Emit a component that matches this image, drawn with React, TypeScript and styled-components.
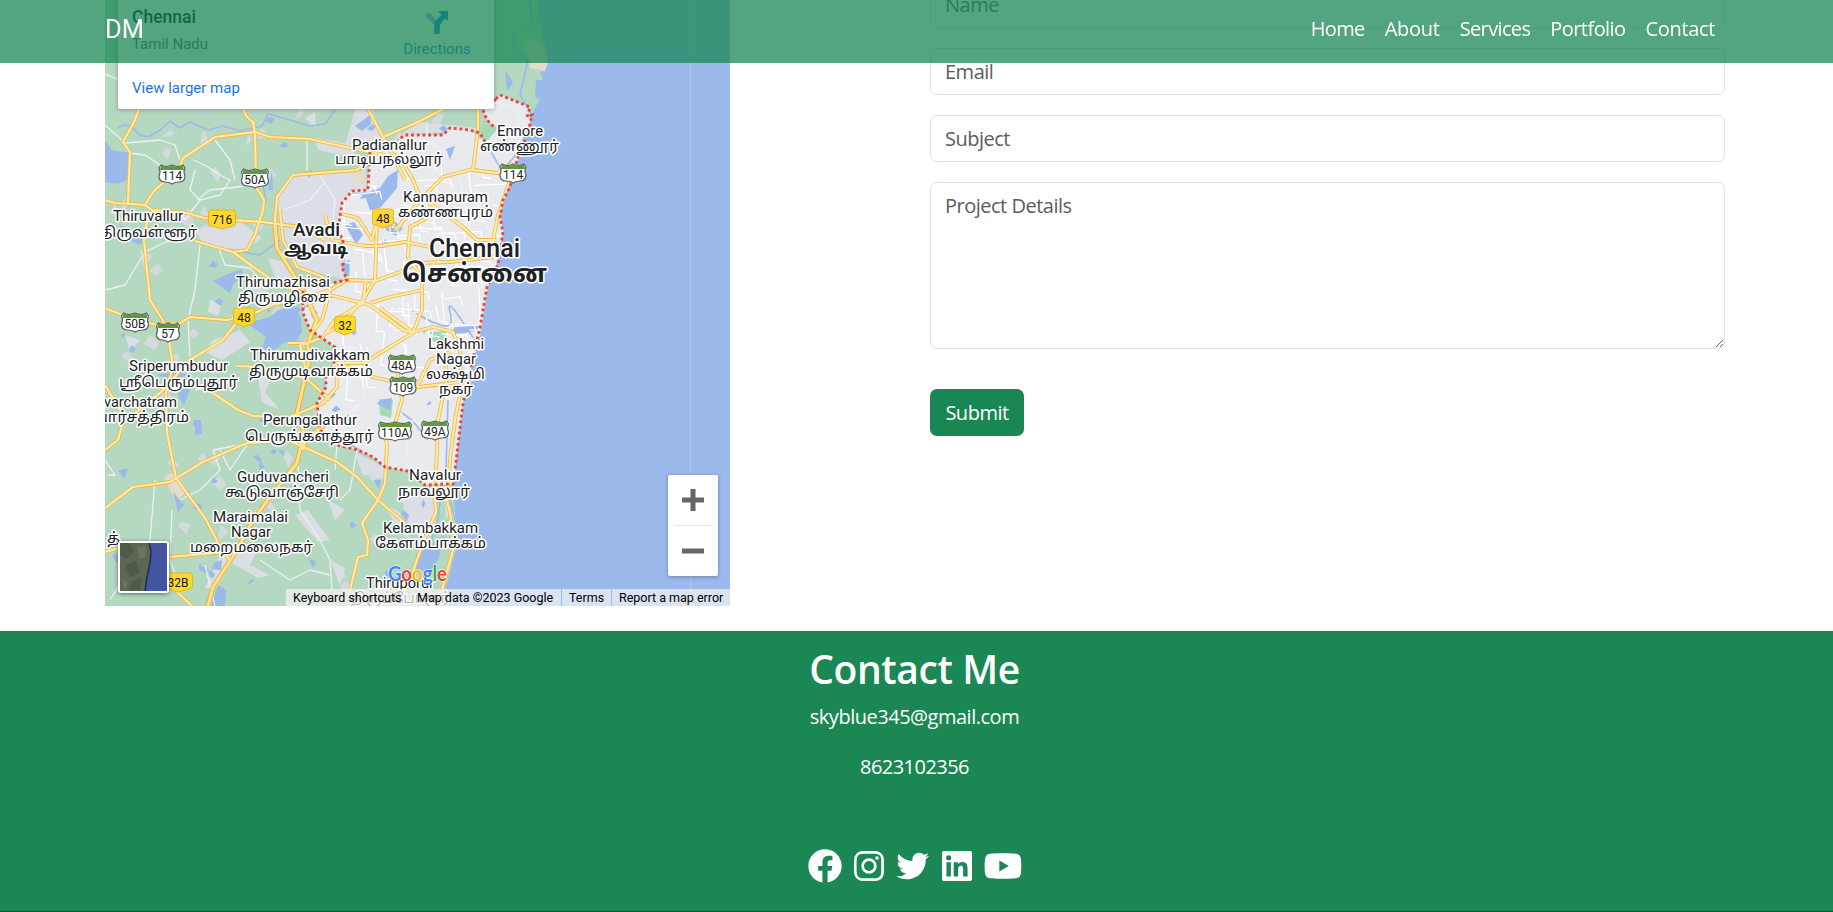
import React from "react";
import styled, { createGlobalStyle } from "styled-components";
import {
  BiLogoFacebookCircle,
  BiLogoInstagram,
  BiLogoTwitter,
  BiLogoLinkedinSquare,
  BiLogoYoutube,
} from "react-icons/bi";

const GlobalStyle = createGlobalStyle`
  * { box-sizing: border-box; }
  body {
    margin: 0;
    background: #fff;
    font-family: "Open Sans", "Noto Sans", sans-serif;
    font-size: 20px;
    color: #212529;
    overflow: hidden;
  }
  a { color: inherit; text-decoration: none; }
`;

const Page = styled.div`
  height: 912px;
  overflow: hidden;
  display: flex;
  flex-direction: column;
`;

const Navbar = styled.header`
  position: fixed;
  inset: 0 0 auto 0;
  z-index: 10;
  height: 63px;
  padding: 0 118px 5px 105px;
  display: flex;
  align-items: center;
  justify-content: space-between;
  background: rgba(25, 135, 84, 0.75);
  color: #fff;
`;

const Brand = styled.a`
  font-family: Roboto, sans-serif;
  font-size: 25.5px;
`;

const Nav = styled.nav`
  display: flex;
  gap: 20px;
`;

const NavLink = styled.a<{ $track: number }>`
  line-height: 30px;
  letter-spacing: ${(p) => p.$track}px;
  white-space: nowrap;
`;

const Main = styled.main`
  display: flex;
  flex: none;
  height: 631px;
  padding-left: 105px;
  gap: 200px;
`;

const MapFrame = styled.section`
  position: relative;
  width: 625px;
  height: 606px;
  overflow: hidden;
  font-family: Roboto, sans-serif;
  & > svg { display: block; }
`;

const PlaceCard = styled.div`
  position: absolute;
  left: 13px;
  top: -12px;
  width: 376px;
  height: 121px;
  padding: 17px 20px 0 14px;
  display: flex;
  justify-content: space-between;
  background: #fff;
  border-radius: 2px;
  box-shadow: 0 1px 4px rgba(0, 0, 0, 0.3);
`;

const PlaceText = styled.div`
  display: flex;
  flex-direction: column;
`;

const PlaceName = styled.b`
  font-weight: 500;
  font-size: 17.5px;
  line-height: 24px;
  color: #000;
`;

const PlaceRegion = styled.span`
  font-size: 15px;
  line-height: 20px;
  margin-top: 5px;
  color: #5b5b5b;
`;

const MapLink = styled.a`
  font-size: 15px;
  line-height: 20px;
  margin-top: 24px;
  color: #1a73e8;
`;

const Directions = styled.a`
  display: flex;
  flex-direction: column;
  align-items: center;
  width: 74px;
  padding-top: 5px;
  font-size: 15px;
  line-height: 20px;
  color: #1a73e8;
  svg { margin-bottom: 5px; }
`;

const ZoomControl = styled.div`
  position: absolute;
  right: 12px;
  bottom: 30px;
  width: 50px;
  height: 101px;
  display: flex;
  flex-direction: column;
  align-items: center;
  background: #fff;
  border-radius: 2px;
  box-shadow: 0 1px 4px rgba(0, 0, 0, 0.3);
`;

const ZoomButton = styled.button`
  flex: 1;
  width: 38px;
  padding: 0;
  border: 0;
  background: none;
  display: grid;
  place-items: center;
  & + & { border-top: 1px solid #e6e6e6; }
`;

const SatelliteThumb = styled.div`
  position: absolute;
  left: 13px;
  bottom: 13px;
  width: 51px;
  height: 52px;
  border: 2px solid #fff;
  border-radius: 3px;
  overflow: hidden;
  box-shadow: 0 1px 4px rgba(0, 0, 0, 0.5);
  svg { display: block; }
`;

const Attribution = styled.div`
  position: absolute;
  right: 0;
  bottom: 0;
  height: 17px;
  display: flex;
  font-size: 12.5px;
  line-height: 18px;
  color: #000;
  white-space: nowrap;
`;

const Credit = styled.span<{ $width: number; $divided?: boolean }>`
  width: ${(p) => p.$width}px;
  padding-left: 7px;
  background: rgba(245, 245, 245, 0.7);
  margin-left: ${(p) => (p.$divided ? 1 : 0)}px;
`;

const Form = styled.form`
  width: 795px;
  margin-top: -19px;
  display: flex;
  flex-direction: column;
  align-items: flex-start;
  gap: 20px;
`;

const Field = styled.input`
  width: 100%;
  height: 47px;
  padding: 0 14px;
  border: 1px solid #dee2e6;
  border-radius: 7px;
  background: #fff;
  font: inherit;
  letter-spacing: -0.5px;
  outline: 0;
  &::placeholder { color: #595c5f; opacity: 1; }
`;

const Details = styled.textarea`
  width: 100%;
  height: 167px;
  padding: 8px 14px;
  border: 1px solid #dee2e6;
  border-radius: 7px;
  font: inherit;
  line-height: 30px;
  letter-spacing: -0.5px;
  resize: vertical;
  outline: 0;
  &::placeholder { color: #595c5f; opacity: 1; }
`;

const SubmitButton = styled.button`
  width: 94px;
  height: 47px;
  margin-top: 20px;
  padding: 0;
  border: 0;
  border-radius: 7px;
  background: #198754;
  color: #fff;
  font: inherit;
  letter-spacing: -0.5px;
`;

const Footer = styled.footer`
  flex: 1;
  display: flex;
  flex-direction: column;
  align-items: center;
  padding: 10px 4px 0 0;
  background: #1a8754;
  border-bottom: 1px solid #2b3a33;
  color: #fff;
`;

const FooterTitle = styled.h1`
  margin: 0;
  font-size: 39px;
  font-weight: 600;
  line-height: 56px;
  letter-spacing: -0.4px;
`;

const FooterLine = styled.p<{ $track: number }>`
  margin: 0 0 20px;
  line-height: 30px;
  letter-spacing: ${(p) => p.$track}px;
  &:first-of-type { margin-top: 5px; }
`;

const Socials = styled.div`
  display: flex;
  align-items: center;
  gap: 4px;
  margin-top: 42px;
  height: 44px;
`;

const GREEN = "#b5d8c0";
const SEA = "#9cb9ec";

const LAND =
  "M105 0H537L541 30 545 45 548 63 545 71 540 72 543 80 536 80 535 97 540 99 534 110 531 120 522 140 520 155 517 165 510 182 505 198 500 215 504 231 500 247 497 262 488 287 484 310 480 335 474 358 467 385 463 410 460 430 457 455 455 470 454 490 455 515 458 540 452 565 445 590 440 606H105Z";

const CITY =
  "M496 99L500 95 530 107 527 117 532 118 522 140 518 157 510 187 503 200 500 217 503 232 498 262 488 287 480 335 463 403 455 470 453 484 425 485 408 471 385 467 373 457 358 450 337 445 320 430 317 403 326 387 326 377 337 357 335 347 310 330 303 313 303 290 333 283 347 280 343 240 338 230 342 203 352 191 368 190 370 152 398 140 405 135 443 135 450 128 470 130 485 142 495 128 487 120 483 110Z";

const BOUNDARIES = [
  "M496 99L500 95 530 107 527 117 532 115 528 133 518 157 510 187 503 200 500 217 503 232 498 265 487 287 480 327 463 403 455 470 453 484 425 485 408 471 385 467 373 457 358 450 337 445 320 430 317 403 326 387 326 377 337 357 335 347 310 330 303 313 303 290",
  "M496 99L483 110 487 120 495 128M485 142L480 133 470 130 450 128 443 135 405 135 398 140M370 152L368 190 352 191 342 203 338 230 343 240 343 270 347 280 333 283",
];

const SUBURBS = [
  "M293 175L357 170 368 190 352 192 342 203 338 230 345 280 300 268 280 240 277 200Z",
  "M303 292L330 288 345 282 345 350 335 347 312 330Z",
  "M355 109L372 109 383 137 370 150 345 144 350 128Z",
  "M392 140L420 122 440 124 478 128 478 130 420 134Z",
  "M195 230L240 222 262 238 245 250 205 246Z",
  "M315 138L350 144 356 158 318 150Z",
  "M213 340L240 330 250 342 222 360 205 352Z",
  "M258 378L275 372 265 392 280 410 262 402Z",
  "M225 545L258 548 250 565 270 575 258 578 232 563 215 590 205 588Z",
  "M295 515L308 510 330 540 318 542Z",
  "M328 500L345 510 335 520Z",
  "M400 486L432 488 436 530 428 540 412 532 405 515Z",
  "M385 505L400 512 410 540 398 530Z",
  "M355 452L384 467 385 480 362 474Z",
  "M268 258L285 262 300 290 278 285Z",
  "M210 300L222 304 218 316 208 312Z",
  "M445 500L452 508 446 520Z",
  "M330 560L345 568 340 585Z",
  "M125 335L140 340 130 352Z",
  "M140 250L152 256 144 268Z",
  "M305 118L315 112 316 128Z",
];

const SANDS = [
  "M523 43L535 39 544 45 548 63 545 71 530 68 528 52Z",
  "M352 172L366 170 366 186 355 184Z",
  "M164 478L172 472 176 480 186 492 176 502Z",
];

const PARKS = [
  "M379 399L393 400 391 418 380 415Z",
  "M430 332L446 331 444 344 432 342Z",
  "M485 120L498 128 488 140 478 136Z",
  "M427 330L424 334 422 330Z",
];

const LAKES = [
  "M105 140L112 150 130 153 127 180 118 184 105 182Z",
  "M352 193L365 196 370 210 380 208 397 188 398 170 388 176 380 188 368 192Z",
  "M247 323L270 317 278 310 296 307 301 318 302 332 295 343 285 342 272 352 262 348 266 337Z",
  "M213 281L228 274 242 269 243 278 234 283 230 293 220 286Z",
  "M355 126L370 115 371 124 362 131Z",
  "M384 222L394 221 403 228 396 236 386 230Z",
  "M345 225L354 222 363 235 356 244Z",
  "M195 420L201 420 202 434 195 435Z",
  "M118 470L128 469 124 479Z",
  "M215 562L222 560 221 570 212 569Z",
  "M218 585L226 590 225 606 211 606Z",
  "M308 558L316 562 313 568Z",
  "M173 492L184 505 178 512Z",
  "M268 190L272 170 273 190Z",
  "M120 225L145 236 140 245 118 236Z",
  "M416 555L445 535 438 560 425 578 415 572Z",
  "M505 70L513 82 508 91 506 82Z",
  "M446 149L455 146 450 160Z",
  "M452 334L455 326 480 325 479 330 465 333Z",
  "M380 400L392 398 390 410 377 404Z",
  "M182 380L190 390 184 405 178 396Z",
  "M157 375L182 370 188 376 170 379Z",
  "M340 264L350 260 349 280Z",
  "M278 450L284 450 284 457Z",
  "M374 480L381 480 379 490Z",
];

const RIVERS = [
  "M118 128Q125 122 133 128 140 138 150 136L160 130 170 121 180 128 190 122 208 130 223 126 240 131 262 126 268 114 290 120 310 126 325 124 335 110",
  "M300 310Q330 290 350 300M262 180L266 200 258 225",
  "M412 310Q425 320 440 325T450 312 468 330 480 325",
  "M530 0L532 25 512 35 515 50 528 60 520 95 535 120 520 150 498 175",
  "M485 140Q495 160 502 170M230 250L260 255 280 240",
  "M448 400L446 470 450 500 462 545M442 480L438 520 425 560",
  "M398 410L412 420 428 440M322 432L345 442 360 450",
];

const ROADS = [
  "M139 109L134 122 123 142 130 152 128 203",
  "M243 109L247 117 253 122 255 133 256 187 264 200 263 210 255 235 247 250 233 252",
  "M145 205L153 192 180 167 183 158 215 137 255 132 270 137 310 139 350 148 385 155",
  "M105 200L115 203 145 205 152 210 187 213 204 218 263 222 300 227 325 240",
  "M277 248L275 220 277 197 293 175 357 170 368 160 372 150",
  "M368 109L383 137 418 122 445 108",
  "M383 138L392 153 403 163 413 180 420 197 443 212 463 227 477 240 497 240",
  "M158 209L147 222 144 240 150 300 167 327 173 367 166 392 167 433 176 478 205 518 222 550 230 560",
  "M195 241L233 252 252 266 272 280 303 293",
  "M105 308L133 319 157 325 180 323 190 317 227 320 257 312 272 305 303 298 330 290",
  "M237 322L223 340 190 360 160 393 150 400 122 425 118 440 105 450",
  "M280 210L283 240 297 267 323 277 330 290 322 320 310 335",
  "M377 220L375 280 363 300 340 325 327 333",
  "M330 290L347 280 375 281 400 272 418 263 450 262 493 257",
  "M330 295L370 305 403 330 413 333M370 303L390 297 422 290",
  "M288 343L308 343 323 337 335 320 363 303 366 280",
  "M337 363L363 363 385 350 413 333M337 363L373 377 418 387 462 382",
  "M213 393L238 410 253 416 290 417 323 403 337 387 336 365",
  "M236 366L263 367 303 378",
  "M105 508L133 487 170 482 203 462 247 443 290 441",
  "M290 441L337 462 357 477 378 500 405 523",
  "M387 443L385 483 378 500 362 523 368 540 367 555 358 557 350 590",
  "M170 557L225 552",
  "M172 587L192 606M105 552L120 548",
  "M510 180L498 215 493 240 488 257",
  "M380 246L405 242 430 247 440 263M325 215L332 240 365 246 385 246",
  "M427 218L410 227 408 257 422 277 422 310 413 332",
  "M380 308L413 332 433 327 453 332 460 350 462 383 455 420 450 460 447 500 450 513 455 543 440 597",
  "M445 353L447 377 438 420 435 500 436 512 423 543 410 580 398 606",
  "M417 387L430 360 450 352",
  "M478 109L478 128 473 170 497 173 513 163",
  "M473 169L443 177 433 187 420 200 400 225 395 230",
  "M342 214L358 218 372 240 377 220 395 225M395 160L405 180",
  "M397 370L402 400 393 430 385 443M105 385L120 410",
  "M310 343L300 345 308 380 330 400",
];

const HIGHWAYS = [
  "M275 225L277 248 303 290 317 320 308 343 308 365 297 413 304 433 297 463 270 497 253 520 237 550 213 587 208 606",
  "M337 415L305 440 303 450",
];

const LANES = [
  "M105 74L120 80M105 125L125 143 160 140 175 145 180 160M130 153L145 155 160 165M193 160L205 165 220 175 230 180 220 195 200 200 190 190 195 170",
  "M215 140L230 160 235 180M200 200L185 220 180 213M197 200L210 190 255 185M105 290L125 285 145 252 170 240M200 245L195 290 188 320 190 357",
  "M218 246L225 265 250 268 268 290M195 390L240 380M155 480L150 540 145 560M180 500L200 490 220 470 213 450 240 445",
  "M220 450L230 470 250 440M298 463L300 510 320 540 330 560 332 590M260 560L290 580 310 570 330 575M105 460L115 475 108 475",
  "M172 510L170 560 180 590M337 445L335 470M357 450L350 490 340 500M307 140L307 170M320 175L335 200 330 250M283 210L310 200 325 182",
  "M350 380L400 375M360 363L365 400 340 420M340 430L380 440M455 425L430 428 410 420M400 410L408 430 407 460",
  "M490 102L518 108 518 130M525 120L518 145 510 160M418 350L400 400M427 122L427 135M135 560L110 600M205 565L215 606",
  "M430 140L440 150 433 175M460 180L470 230 478 260M390 380L400 440M345 300L342 345 360 350",
];

const randomSource = (start: number) => {
  let seed = start;
  return () => {
    seed = (seed * 1103515245 + 12345) % 2147483648;
    return seed / 2147483648;
  };
};

const cityLanes = (): string[] => {
  const lines: string[] = [];
  const next = randomSource(17);
  for (let i = 0; i < 110; i++) {
    const x = 335 + next() * 160;
    const y = 165 + next() * 220;
    const tilt = (next() - 0.5) * 8;
    const a = 8 + next() * 26;
    lines.push(
      i % 2
        ? `M${x.toFixed(1)} ${y.toFixed(1)}l${a.toFixed(1)} ${tilt.toFixed(1)} 2 8`
        : `M${x.toFixed(1)} ${y.toFixed(1)}l${tilt.toFixed(1)} ${a.toFixed(1)} 8 1`
    );
  }
  return lines;
};

const patches = (start: number, count: number, size: number): string[] => {
  const next = randomSource(start);
  return Array.from({ length: count }, () => {
    const x = 108 + next() * 340;
    const y = 115 + next() * 485;
    const s = () => ((0.4 + next()) * size).toFixed(1);
    return `M${x.toFixed(1)} ${y.toFixed(1)}l${s()} -${s()} ${s()} ${s()} -${s()} ${s()}Z`;
  });
};

type Label = [text: string, x1: number, x2: number, y: number, size?: number, weight?: number];

const LABELS: Label[] = [
  ["Padianallur", 352, 427, 150],
  ["பாடியநல்லூர்", 335, 443, 164],
  ["Ennore", 497, 543, 136],
  ["எண்ணூர்", 480, 559, 151],
  ["Kannapuram", 403, 488, 202],
  ["கண்ணபுரம்", 398, 493, 217],
  ["Thiruvallur", 113, 183, 221],
  ["திருவள்ளூர்", 100, 197, 237],
  ["Avadi", 293, 340, 236, 19, 500],
  ["ஆவடி", 284, 348, 254, 17, 700],
  ["Chennai", 429, 520, 257, 25, 500],
  ["சென்னை", 402, 547, 282, 25, 700],
  ["Thirumazhisai", 236, 330, 287],
  ["திருமழிசை", 238, 329, 302],
  ["Thirumudivakkam", 250, 370, 360],
  ["திருமுடிவாக்கம்", 249, 373, 376],
  ["Lakshmi", 428, 484, 349],
  ["Nagar", 436, 476, 364],
  ["லக்ஷ்மி", 426, 485, 379],
  ["நகர்", 439, 473, 394],
  ["Sriperumbudur", 129, 228, 371],
  ["ஸ்ரீபெரும்புதூர்", 119, 238, 387],
  ["varchatram", 104, 177, 407],
  ["வார்சத்திரம்", 92, 189, 422],
  ["Perungalathur", 263, 357, 425],
  ["பெருங்களத்தூர்", 245, 374, 441],
  ["Guduvancheri", 237, 329, 482],
  ["கூடுவாஞ்சேரி", 225, 339, 497],
  ["Maraimalai", 213, 288, 522],
  ["Nagar", 231, 271, 537],
  ["மறைமலைநகர்", 190, 313, 552],
  ["Navalur", 409, 461, 480],
  ["நாவலூர்", 398, 470, 496],
  ["Kelambakkam", 383, 478, 533],
  ["கேளம்பாக்கம்", 375, 486, 548],
  ["Thiruporur", 366, 434, 588],
  ["திருப்போரூர்", 350, 450, 603],
  ["த்", 107, 120, 543],
];

const US_SHIELDS: [string, number, number, number][] = [
  ["114", 172, 174, 26],
  ["50A", 255, 178, 27],
  ["114", 513, 173, 26],
  ["50B", 135, 322, 27],
  ["57", 168, 332, 23],
  ["48A", 402, 364, 27],
  ["109", 403, 386, 26],
  ["110A", 395, 431, 33],
  ["49A", 435, 430, 27],
];

const STATE_SHIELDS: [string, number, number, number][] = [
  ["716", 222, 219, 25],
  ["48", 383, 218, 19],
  ["48", 244, 317, 19],
  ["32", 345, 325, 19],
  ["32B", 178, 582, 27],
];

const UsShield = ({ text, x, y, w }: { text: string; x: number; y: number; w: number }) => {
  const h = w / 2;
  return (
    <g transform={`translate(${x} ${y})`}>
      <path
        d={`M${-h + 2} -9Q${-h / 2} -6 0 -9 ${h / 2} -6 ${h - 2} -9L${h} -6Q${h - 2} -2 ${h} 2 ${h} 8 ${h - 6} 8 3 8 0 10 -3 8 ${-h + 6} 8 ${-h} 8 ${-h} 2 ${-h + 2} -2 ${-h} -6Z`}
        fill="#fff"
        stroke="#5d6164"
        strokeWidth="1.2"
      />
      <path
        d={`M${-h + 2} -8.6Q${-h / 2} -5.6 0 -8.6 ${h / 2} -5.6 ${h - 2} -8.6L${h - 1} -4H${-h + 1}Z`}
        fill="#5f9a3a"
      />
      <text y="5.500" textAnchor="middle" fontSize="12" fill="#222">{text}</text>
    </g>
  );
};

const StateShield = ({ text, x, y, w }: { text: string; x: number; y: number; w: number }) => {
  const h = w / 2 + 1;
  return (
    <g transform={`translate(${x} ${y})`}>
      <path
        d={`M${-h + 3} -9H${h - 3}Q${h} -9 ${h} -6V4Q${h} 7 ${h - 3} 7L0 10 ${-h + 3} 7Q${-h} 7 ${-h} 4V-6Q${-h} -9 ${-h + 3} -9Z`}
        fill="#fdd835"
        stroke="#e3b71f"
      />
      <text y="4.500" textAnchor="middle" fontSize="12" fill="#222">{text}</text>
    </g>
  );
};

const MapDrawing = () => (
  <svg width="625" height="606" viewBox="105 0 625 606" fontFamily='Roboto, "Noto Sans Tamil", "Noto Sans", sans-serif'>
    <defs>
      <clipPath id="city"><path d={CITY} /></clipPath>
      <clipPath id="land"><path d={LAND} /></clipPath>
    </defs>
    <rect x="105" width="625" height="606" fill={SEA} />
    <path d={LAND} fill={GREEN} />
    <g clipPath="url(#land)">
      {patches(5, 75, 7).map((d) => <path key={d} d={d} fill="#d5dadf" />)}
      {SUBURBS.map((d) => <path key={d} d={d} fill="#dbdee4" />)}
      <path d={CITY} fill="#e8eaee" />
      {patches(91, 45, 4).map((d) => <path key={d} d={d} fill={SEA} />)}
      {SANDS.map((d) => <path key={d} d={d} fill="#e4dccb" />)}
      {PARKS.map((d) => <path key={d} d={d} fill="#a5d9b8" />)}
      {LAKES.map((d) => <path key={d} d={d} fill={SEA} />)}
      <g fill="none" stroke={SEA} strokeWidth="1.600">
        {RIVERS.map((d) => <path key={d} d={d} />)}
      </g>
      <g fill="none" stroke="#eef1f4" strokeWidth="1.300" strokeLinejoin="round">
        {LANES.map((d) => <path key={d} d={d} />)}
      </g>
      <g fill="none" stroke="#fff" strokeWidth="1.200" clipPath="url(#city)">
        {cityLanes().map((d) => <path key={d} d={d} />)}
      </g>
      <g fill="none" stroke="#f0b93f" strokeWidth="3.800" strokeLinejoin="round">
        {ROADS.map((d) => <path key={d} d={d} />)}
      </g>
      <g fill="none" stroke="#f0b12d" strokeWidth="5" strokeLinejoin="round">
        {HIGHWAYS.map((d) => <path key={d} d={d} />)}
      </g>
      <g fill="none" stroke="#fdeaae" strokeWidth="2.200" strokeLinejoin="round">
        {ROADS.map((d) => <path key={d} d={d} />)}
      </g>
      <g fill="none" stroke="#fde293" strokeWidth="3" strokeLinejoin="round">
        {HIGHWAYS.map((d) => <path key={d} d={d} />)}
      </g>
    </g>
    <g fill="none" stroke="#ea4335" strokeWidth="2.800" strokeDasharray="2.800 2.900">
      {BOUNDARIES.map((d) => <path key={d} d={d} />)}
    </g>
    <path d="M690.500 0V606" stroke="#b0c4ea" />
    {US_SHIELDS.map(([t, x, y, w]) => <UsShield key={t + x} text={t} x={x} y={y} w={w} />)}
    {STATE_SHIELDS.map(([t, x, y, w]) => <StateShield key={t + x} text={t} x={x} y={y} w={w} />)}
    <g fill="#202124" stroke="#fff" strokeWidth="3" strokeLinejoin="round" paintOrder="stroke">
      {LABELS.map(([t, x1, x2, y, size = 14.5, weight = 400]) => (
        <text
          key={t + y}
          x={x1}
          y={y}
          textLength={x2 - x1}
          lengthAdjust="spacingAndGlyphs"
          fontSize={size}
          fontWeight={weight}
        >
          {t}
        </text>
      ))}
    </g>
    <text
      x="388"
      y="581"
      textLength="59"
      lengthAdjust="spacingAndGlyphs"
      fontFamily="Lato, sans-serif"
      fontSize="20.500"
      fontWeight="700"
      stroke="#fff"
      strokeWidth="1.200"
      paintOrder="stroke"
    >
      <tspan fill="#4285f4">G</tspan>
      <tspan fill="#ea4335">o</tspan>
      <tspan fill="#fbbc04">o</tspan>
      <tspan fill="#4285f4">g</tspan>
      <tspan fill="#34a853">l</tspan>
      <tspan fill="#ea4335">e</tspan>
    </text>
  </svg>
);

const DirectionsIcon = () => (
  <svg width="24" height="24" viewBox="0 0 24 24" fill="none">
    <path d="M2 4L11 13" stroke="#1a73e8" strokeOpacity="0.55" strokeWidth="5" />
    <path d="M12 24V17Q12 13 15 10L19 6" stroke="#1a73e8" strokeWidth="5.500" />
    <path d="M13 1H23V11Z" fill="#1a73e8" />
  </svg>
);

const Satellite = () => (
  <svg width="47" height="48" viewBox="0 0 47 48">
    <rect width="47" height="48" fill="#4355a0" />
    <path d="M0 0H29L31 8 30 20 27 34 25 48H0Z" fill="#5c6652" />
    <path d="M0 0H10L14 9 6 16 0 12ZM5 22L16 18 20 30 10 34ZM12 38L22 35 20 48H9Z" fill="#4f5b48" />
    <path d="M17 4L25 3 26 14 19 16ZM2 36L8 40 4 46Z" fill="#6c765e" />
    <path d="M29 0L31 8 30 20 27 34 25 48" fill="none" stroke="#1f2d52" strokeWidth="1.500" />
  </svg>
);

const navItems: [string, number][] = [
  ["Home", -0.65],
  ["About", -0.25],
  ["Services", -0.65],
  ["Portfolio", -0.55],
  ["Contact", -0.35],
];

export default function App() {
  return (
    <Page>
      <GlobalStyle />
      <Navbar>
        <Brand href="#">DM</Brand>
        <Nav>
          {navItems.map(([name, track]) => (
            <NavLink key={name} href="#" $track={track}>{name}</NavLink>
          ))}
        </Nav>
      </Navbar>
      <Main>
        <MapFrame>
          <MapDrawing />
          <PlaceCard>
            <PlaceText>
              <PlaceName>Chennai</PlaceName>
              <PlaceRegion>Tamil Nadu</PlaceRegion>
              <MapLink href="#">View larger map</MapLink>
            </PlaceText>
            <Directions href="#">
              <DirectionsIcon />
              Directions
            </Directions>
          </PlaceCard>
          <SatelliteThumb><Satellite /></SatelliteThumb>
          <ZoomControl>
            <ZoomButton aria-label="Zoom in">
              <svg width="22" height="22"><path d="M0 11H22M11 0V22" stroke="#666" strokeWidth="5" /></svg>
            </ZoomButton>
            <ZoomButton aria-label="Zoom out">
              <svg width="22" height="22"><path d="M0 11H22" stroke="#666" strokeWidth="5" /></svg>
            </ZoomButton>
          </ZoomControl>
          <Attribution>
            <Credit $width={124}>Keyboard shortcuts</Credit>
            <Credit $width={151}>Map data ©2023 Google</Credit>
            <Credit $width={49} $divided>Terms</Credit>
            <Credit $width={118} $divided>Report a map error</Credit>
          </Attribution>
        </MapFrame>
        <Form>
          <Field placeholder="Name" />
          <Field placeholder="Email" />
          <Field placeholder="Subject" />
          <Details placeholder="Project Details" />
          <SubmitButton type="button">Submit</SubmitButton>
        </Form>
      </Main>
      <Footer>
        <FooterTitle>Contact Me</FooterTitle>
        <FooterLine $track={-0.48}>skyblue345@gmail.com</FooterLine>
        <FooterLine $track={-0.55}>8623102356</FooterLine>
        <Socials>
          <BiLogoFacebookCircle size={40} />
          <BiLogoInstagram size={40} />
          <BiLogoTwitter size={40} />
          <BiLogoLinkedinSquare size={40} />
          <BiLogoYoutube size={44} />
        </Socials>
      </Footer>
    </Page>
  );
}
